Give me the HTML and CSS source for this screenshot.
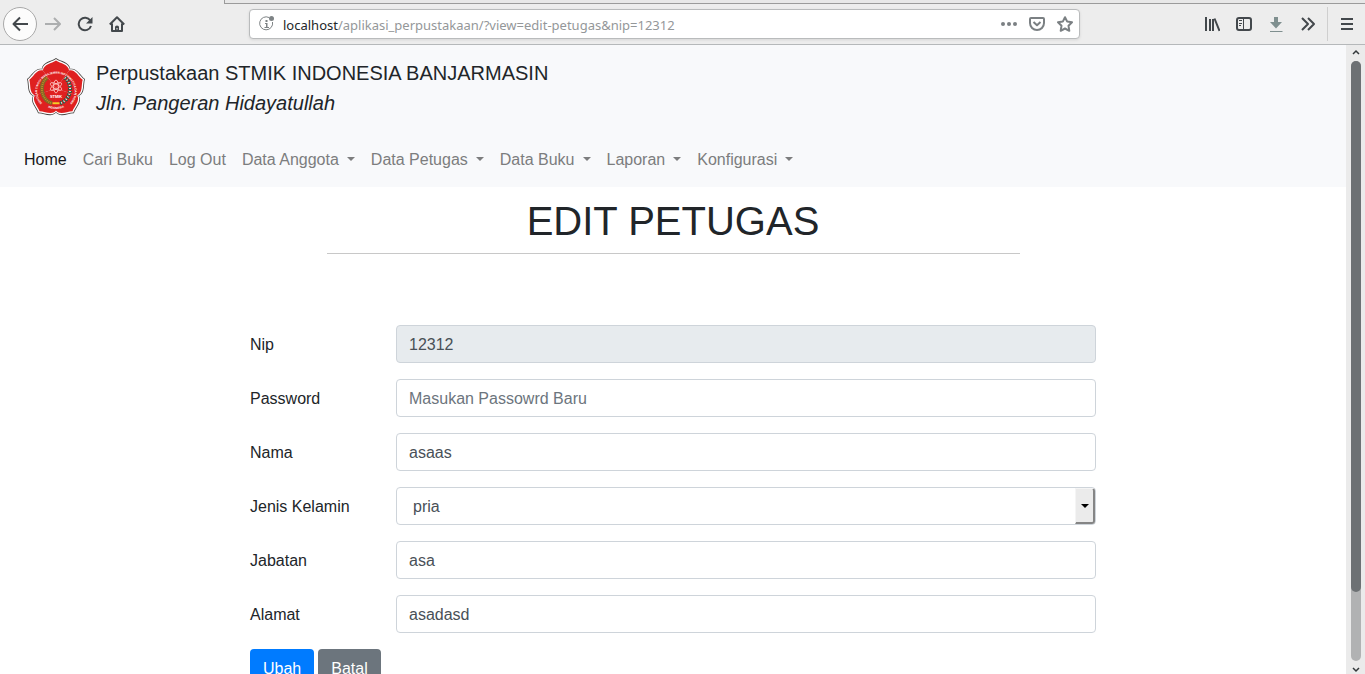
FILE: index.html
```html
<!DOCTYPE html>
<html lang="id">
<head>
<meta charset="utf-8">
<title>Edit Petugas</title>
<link rel="stylesheet" href="styles.css">
</head>
<body>
<div class="browser-bar">
  <div class="tab-edge"></div>
  <div class="toolbar">
    <button class="tool back" aria-label="Back"><svg viewBox="0 0 16 16"><path d="M16 8H1.500M8 1.500 1.500 8 8 14.500"/></svg></button>
    <button class="tool faded" aria-label="Forward"><svg viewBox="0 0 16 16"><path d="M0 8h15M9 2l6 6-6 6"/></svg></button>
    <button class="tool" aria-label="Reload"><svg viewBox="0 0 16 16"><path d="M13.300 4.500A6.300 6.300 0 1 0 14 10"/><path class="solid" d="M15.500 1v6.500H9z"/></svg></button>
    <button class="tool" aria-label="Home"><svg viewBox="0 0 16 16"><path d="M.8 8.500 8 1.300l7.200 7.200M3 7.500V15h10V7.500"/><path class="solid" d="M6 15v-4q0-1.500 2-1.500t2 1.500v4z"/><path class="hole" d="M7.500 12h1v1.500h-1z"/></svg></button>
    <div class="address">
      <svg class="info" viewBox="0 0 18 18"><path d="M11 2.500A6.500 6.500 0 1 0 14.500 7"/><path class="solid" d="M7 8h2.500v4H11v1H6.500v-1H8V9H7zM7.500 5h2v2h-2z"/><circle class="solid" cx="13.500" cy="3.500" r="2.500"/></svg>
      <div class="url"><span class="host">localhost</span>/aplikasi_perpustakaan/?view=edit-petugas&amp;nip=12312</div>
      <button class="mini" aria-label="Page actions"><svg viewBox="0 0 16 16"><g class="solid"><circle cx="2" cy="8" r="2"/><circle cx="8" cy="8" r="2"/><circle cx="14" cy="8" r="2"/></g></svg></button>
      <button class="mini" aria-label="Save to Pocket"><svg viewBox="0 0 16 16"><path d="M2 2h12q1 0 1 1v4A7 7 0 0 1 1 7V3q0-1 1-1zM4.500 6 8 9.300 11.500 6"/></svg></button>
      <button class="mini" aria-label="Bookmark"><svg viewBox="0 0 16 16"><path d="M8 1.200 10.200 5.600 15 6.300 11.500 9.700 12.300 14.800 8 12.500 3.700 14.800 4.500 9.700 1 6.300 5.800 5.600z"/></svg></button>
    </div>
    <button class="tool" aria-label="Library"><svg viewBox="0 0 16 16"><path d="M2 1v14M6 3v12M9 3v12M10.500 2.500 15.500 15"/></svg></button>
    <button class="tool" aria-label="Sidebars"><svg viewBox="0 0 16 16"><rect x="1" y="2" width="14" height="12" rx="2"/><path class="thin" d="M7.500 2v12M3 4.500h3M3 7.500h3M3 9.500h2"/></svg></button>
    <button class="tool download" aria-label="Downloads"><svg viewBox="0 0 16 16"><path class="solid" d="M6 1h4v5h4l-6 6.500L2 6h4z"/><path class="thin" d="M2 15.500h12.500"/></svg></button>
    <button class="tool" aria-label="More tools"><svg viewBox="0 0 16 16"><path d="m2 2 6 6-6 6M8 2l6 6-6 6"/></svg></button>
    <span class="divider"></span>
    <button class="tool" aria-label="Menu"><svg viewBox="0 0 16 16"><path d="M2 3h12M2 8h12M2 13h12"/></svg></button>
  </div>
</div>
<div class="viewport">
  <div class="page">
    <header class="site-header">
      <a class="brand" href="#">
        <svg class="logo" viewBox="-30 -31 60 61" role="img" aria-label="STMIK Indonesia Banjarmasin">
          <defs>
            <path id="petal" d="M0 0-14.500-20C-13.500-27-5-27.500 0-31C5-27.500 13.500-27 14.500-20Z"/>
            <g id="flower"><use href="#petal"/><use href="#petal" transform="rotate(72)"/><use href="#petal" transform="rotate(144)"/><use href="#petal" transform="rotate(216)"/><use href="#petal" transform="rotate(288)"/></g>
            <path id="ring" d="M-14 15A19 18 0 1 1 14 15"/>
            <path id="foot" d="M-14 15.500A21 21 0 0 0 14 15.500"/>
          </defs>
          <use href="#flower" fill="#474341"/>
          <use href="#flower" fill="#fff" transform="scale(.97)"/>
          <use href="#flower" fill="#df2020" transform="scale(.92)"/>
          <text class="seal"><textPath href="#ring">SEKOLAH TINGGI MANAJEMEN INFORMATIKA DAN KOMPUTER</textPath></text>
          <text class="seal"><textPath href="#foot" startOffset="7">INDONESIA</textPath></text>
          <path d="M-9-11C-18-4-15 12-4 15" fill="none" stroke="#806526" stroke-width="4"/>
          <path d="M-9-11C-18-4-15 12-4 15" fill="none" stroke="#bd8f28" stroke-width="2" stroke-dasharray="1 1"/>
          <path d="M9-11C18-4 15 12 4 15" fill="none" stroke="#235a45" stroke-width="4" stroke-dasharray="2 1"/>
          <path d="M9-11C18-4 15 12 4 15" fill="none" stroke="#e5eee9" stroke-width="2" stroke-dasharray="1 2"/>
          <g fill="none" stroke="#ffd0cd" stroke-width=".8"><ellipse cy="-2" rx="2.500" ry="6.500"/><ellipse cy="-2" rx="2.500" ry="6.500" transform="rotate(60 0 -2)"/><ellipse cy="-2" rx="2.500" ry="6.500" transform="rotate(120 0 -2)"/></g>
          <text class="seal-name" y="10">STMIK</text>
          <path d="M-3.500 14h7v2h-7z" fill="#f3cf26"/>
        </svg>
        <span class="brand-text">Perpustakaan STMIK INDONESIA BANJARMASIN<br><em>Jln. Pangeran Hidayatullah</em></span>
      </a>
      <nav class="menu">
        <a class="active" href="#">Home</a>
        <a href="#">Cari Buku</a>
        <a href="#">Log Out</a>
        <a class="dropdown" href="#">Data Anggota</a>
        <a class="dropdown" href="#">Data Petugas</a>
        <a class="dropdown" href="#">Data Buku</a>
        <a class="dropdown" href="#">Laporan</a>
        <a class="dropdown" href="#">Konfigurasi</a>
      </nav>
    </header>
    <main>
      <h1>EDIT PETUGAS</h1>
      <hr>
      <form class="form">
        <div class="row"><label for="nip">Nip</label><input class="control" id="nip" value="12312" readonly></div>
        <div class="row"><label for="password">Password</label><input class="control" id="password" type="password" placeholder="Masukan Passowrd Baru"></div>
        <div class="row"><label for="nama">Nama</label><input class="control" id="nama" value="asaas"></div>
        <div class="row"><label for="kelamin">Jenis Kelamin</label>
          <div class="select-box"><select class="control" id="kelamin"><option>pria</option><option>wanita</option></select><span class="select-arrow"></span></div>
        </div>
        <div class="row"><label for="jabatan">Jabatan</label><input class="control" id="jabatan" value="asa"></div>
        <div class="row"><label for="alamat">Alamat</label><input class="control" id="alamat" value="asadasd"></div>
        <div class="actions"><button class="btn primary" type="submit">Ubah</button><button class="btn secondary" type="button">Batal</button></div>
      </form>
    </main>
  </div>
  <div class="scrollbar" aria-hidden="true">
    <svg class="up" viewBox="0 0 8 6"><path d="M1 5l3-3 3 3"/></svg>
    <div class="track"><div class="thumb"></div></div>
    <svg class="down" viewBox="0 0 8 6"><path d="M1 1l3 3 3-3"/></svg>
  </div>
</div>
</body>
</html>
```

FILE: styles.css
```css
* { box-sizing: border-box; }
body {
  margin: 0;
  height: 100vh;
  display: flex;
  flex-direction: column;
  overflow: hidden;
  font: 16px/24px "Liberation Sans", Arial, sans-serif;
  color: #212529;
  background: #fff;
}
button { font: inherit; border: 0; padding: 0; }

/* Browser chrome */
.browser-bar { flex: none; background: #ededed; border-bottom: 1px solid #b5b8ba; }
.tab-edge { height: 4px; margin-left: 224px; border-left: 1px solid #9b9b9b; border-bottom: 1px solid #9b9b9b; background: #e8e8e8; }
.toolbar { height: 40px; padding: 0 2px 0 3px; display: flex; align-items: center; }
.tool { flex: none; width: 32px; height: 34px; display: grid; place-items: center; background: none; color: #43484c; }
.tool svg, .mini svg { width: 16px; height: 16px; }
.browser-bar svg { fill: none; stroke: currentColor; stroke-width: 2; stroke-linejoin: round; }
.browser-bar .solid { fill: currentColor; stroke: none; }
.browser-bar .hole { fill: #ededed; stroke: none; }
.browser-bar .thin { stroke-width: 1; }
.back { width: 34px; border: 1px solid #a9a9a9; border-radius: 50%; background: #fcfcfc; }
.faded { color: #acaeaf; }
.download { color: #7f8f8f; }
.divider { width: 1px; height: 34px; margin: 0 3px; background: #cfcfcf; }
.address {
  flex: 1;
  height: 30px;
  margin: 0 116px;
  padding: 0 6px 0 8px;
  display: flex;
  align-items: center;
  background: #fff;
  border: 1px solid #b9bbbc;
  border-radius: 4px;
  box-shadow: 0 1px 3px #0000001a;
  color: #7e8385;
}
.browser-bar .info { width: 18px; height: 18px; margin-right: 7px; stroke-width: 1; }
.url { flex: 1; padding-top: 2px; font: 13px/20px "Noto Sans", sans-serif; color: #949799; white-space: nowrap; overflow: hidden; }
.host { color: #232729; }
.mini { width: 16px; height: 16px; margin-left: 12px; display: grid; background: none; color: #7b8083; }

/* Page */
.viewport { flex: 1; min-height: 0; display: flex; }
.page { flex: 1; overflow: hidden; }
.site-header { padding: 8px 16px; background: #f8f9fb; }
.brand { display: flex; gap: 10px; padding: 5px 10px; color: #212529; text-decoration: none; font-size: 20px; line-height: 30px; }
.logo { width: 60px; height: 60px; }
.seal { font-size: 3px; font-weight: bold; fill: #fff; }
.seal-name { font-size: 4px; font-weight: bold; fill: #fff; text-anchor: middle; }
.menu { display: flex; margin-top: 16px; }
.menu a { padding: 9px 8px 7px; color: #7c7d7e; text-decoration: none; }
.menu .active { color: #17181a; }
.dropdown::after { content: ""; display: inline-block; margin-left: 8px; vertical-align: 4px; border: 4px solid transparent; border-top-color: currentColor; border-bottom: 0; }

main { padding: 10px 16px; }
h1 { margin: 0; font-size: 40px; font-weight: 400; line-height: 48px; text-align: center; }
hr { max-width: 693px; margin: 8px auto 71px; border: 0; border-top: 1px solid #c8c8c8; }
.form { max-width: 846px; margin: 0 auto; }
.row { display: grid; grid-template-columns: 146px 1fr; align-items: center; margin-bottom: 16px; }
.row label { padding-top: 2px; }
.control {
  width: 100%;
  height: 38px;
  padding: 7px 12px 5px;
  border: 1px solid #ced4da;
  border-radius: 4px;
  background: #fff;
  color: #495057;
  font: inherit;
}
.control::placeholder { color: #6c757d; opacity: 1; }
.control:read-only:not(select) { background: #e7ebee; }
.select-box { position: relative; }
select.control { appearance: none; padding-left: 16px; }
.select-arrow {
  position: absolute;
  inset: 1px 1px 1px auto;
  width: 20px;
  display: grid;
  place-items: center;
  background: #ebebeb;
  border: 1px solid #f5f5f5;
  border-right: 2px solid #858585;
  border-bottom: 2px solid #858585;
  border-radius: 0 3px 3px 0;
  pointer-events: none;
}
.select-arrow::after { content: ""; border: 4px solid transparent; border-top-color: #000; border-bottom: 0; }
.actions { display: flex; gap: 4px; }
.btn { height: 38px; padding: 2px 13px 0; border-radius: 4px; color: #fff; }
.primary { background: #007bff; }
.secondary { background: #6c757d; }

.scrollbar { width: 19px; padding: 4px 0 0 1px; display: flex; flex-direction: column; align-items: center; background: #ebebeb; }
.scrollbar svg { width: 8px; height: 6px; fill: none; stroke: #33383b; stroke-width: 1.5; }
.up { margin-bottom: 6px; }
.down { margin: 6px 0 1px; }
.track { flex: 1; width: 10px; border-radius: 5px; background: #b1b2b3; }
.thumb { height: 88.5%; border-radius: 5px; background: #6d7174; }
```
